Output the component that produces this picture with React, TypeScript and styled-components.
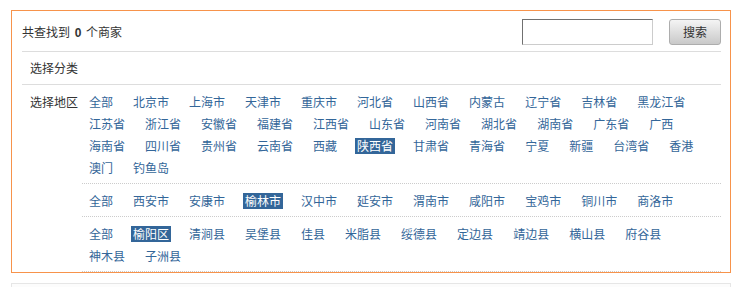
import React from "react";
import styled, { createGlobalStyle } from "styled-components";

const GlobalStyle = createGlobalStyle`
  html, body {
    margin: 0;
    padding: 0;
    background: #fff;
  }
  body {
    font-family: "Noto Sans CJK SC", "Liberation Sans", sans-serif;
    font-size: 12px;
    color: #333;
  }
`;

const provinces = [
  "全部", "北京市", "上海市", "天津市", "重庆市", "河北省", "山西省", "内蒙古", "辽宁省", "吉林省", "黑龙江省",
  "江苏省", "浙江省", "安徽省", "福建省", "江西省", "山东省", "河南省", "湖北省", "湖南省", "广东省", "广西",
  "海南省", "四川省", "贵州省", "云南省", "西藏", "陕西省", "甘肃省", "青海省", "宁夏", "新疆", "台湾省", "香港",
  "澳门", "钓鱼岛",
];

const cities = ["全部", "西安市", "安康市", "榆林市", "汉中市", "延安市", "渭南市", "咸阳市", "宝鸡市", "铜川市", "商洛市"];

const counties = ["全部", "榆阳区", "清涧县", "吴堡县", "佳县", "米脂县", "绥德县", "定边县", "靖边县", "横山县", "府谷县", "神木县", "子洲县"];

function App() {
  return (
    <>
      <GlobalStyle />
      <Page>
        <FilterBox>
          <HeaderRow>
            <Count>共查找到 <b>0</b> 个商家</Count>
            <SearchForm>
              <SearchInput type="text" />
              <SearchButton>搜索</SearchButton>
            </SearchForm>
          </HeaderRow>
          <CategoryRow>选择分类</CategoryRow>
          <RegionRow>
            <RegionLabel>选择地区</RegionLabel>
            <Levels>
              <LinkGroup items={provinces} active="陕西省" />
              <LinkGroup items={cities} active="榆林市" />
              <LinkGroup items={counties} active="榆阳区" />
            </Levels>
          </RegionRow>
        </FilterBox>
        <ResultBox />
      </Page>
    </>
  );
}

function LinkGroup({ items, active }: { items: string[]; active: string }) {
  return (
    <Level>
      {items.map((name) => (
        <AreaLink key={name} $active={name === active}>{name}</AreaLink>
      ))}
    </Level>
  );
}

export default App;

const Page = styled.div`
  padding: 10px 21px 0 11px;
`;

const FilterBox = styled.div`
  width: 699px;
  border: 1px solid #f7934b;
  padding: 0 9px 0 10px;
`;

const HeaderRow = styled.div`
  display: flex;
  justify-content: space-between;
  align-items: center;
  height: 40px;
  border-bottom: 1px solid #dddddd;
`;

const Count = styled.div`
  b {
    font-family: "Liberation Sans", sans-serif;
    font-weight: 700;
    margin: 0 2px;
  }
`;

const SearchForm = styled.div`
  display: flex;
  align-items: center;
  gap: 16px;
  margin-top: 1px;
`;

const SearchInput = styled.input`
  box-sizing: border-box;
  width: 131px;
  height: 26px;
  border: 1px solid;
  border-color: #707070 #cccccc #cccccc #707070;
  padding: 0 4px;
  outline: none;
`;

const SearchButton = styled.button`
  box-sizing: border-box;
  width: 52px;
  height: 26px;
  border: 1px solid #adadad;
  border-radius: 3px;
  background: linear-gradient(#f4f4f4, #c9c9c9);
  font-family: "Noto Sans CJK SC", sans-serif;
  font-size: 12px;
  color: #333;
  padding: 0;
  cursor: pointer;
`;

const CategoryRow = styled.div`
  height: 32px;
  line-height: 32px;
  padding-left: 8px;
  border-bottom: 1px solid #dddddd;
`;

const RegionRow = styled.div`
  display: flex;
  align-items: flex-start;
`;

const RegionLabel = styled.div`
  width: 52px;
  padding: 6px 0 0 8px;
  line-height: 22px;
`;

const Levels = styled.div`
  flex: 1;
`;

const Level = styled.div`
  display: flex;
  flex-wrap: wrap;
  padding: 6px 0 4px 5px;
  border-bottom: 1px dotted #cccccc;
`;

const AreaLink = styled.a<{ $active: boolean }>`
  display: inline-block;
  line-height: 16px;
  margin: 3px 16px 3px 0;
  padding: 0 2px;
  color: ${(p) => (p.$active ? "#fff" : "#336699")};
  background: ${(p) => (p.$active ? "#336699" : "transparent")};
  text-decoration: none;
  cursor: pointer;
  white-space: nowrap;
`;

const ResultBox = styled.div`
  margin-top: 10px;
  height: 40px;
  width: 718px;
  border: 1px solid #e6e6e6;
  background: #fcfcfc;
`;
